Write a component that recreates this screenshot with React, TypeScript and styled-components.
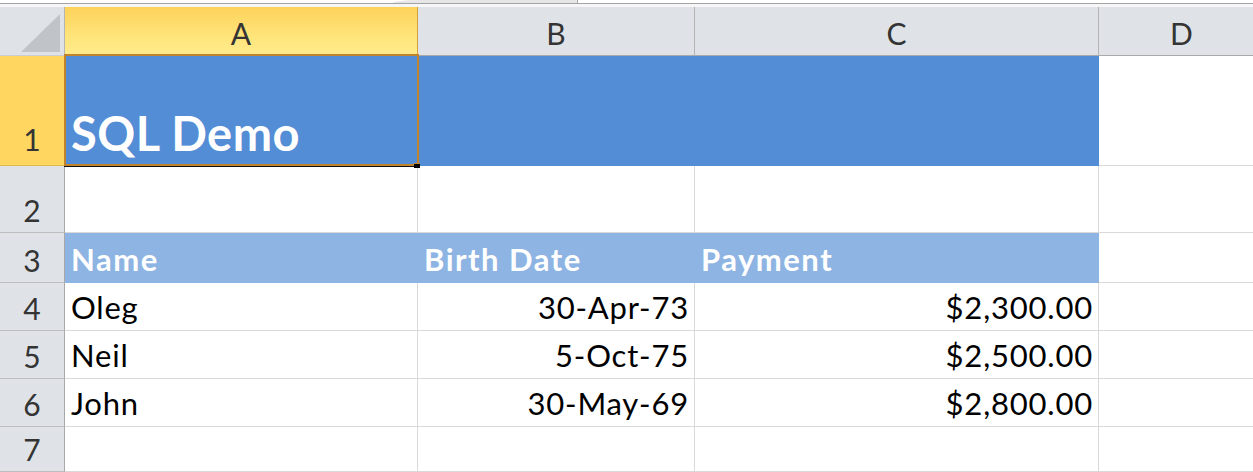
import React from "react";
import styled, { createGlobalStyle, css } from "styled-components";

const GlobalStyle = createGlobalStyle`
  html, body {
    margin: 0;
    padding: 0;
    background: #ffffff;
    overflow: hidden;
  }
  body {
    font-family: "Lato", "Open Sans", sans-serif;
  }
`;

const gridLine = "#d9d9d9";
const headerLine = "#b4b4b4";
const selectOrange = "#c1842c";

type Align = "left" | "right";
type Fill = "dark" | "light" | undefined;

const fills = {
  dark: "#538dd5",
  light: "#8db4e2",
};

const Page = styled.div`
  display: flex;
  flex-direction: column;
  width: 100vw;
  height: 100vh;
  overflow: hidden;
`;

const TopBar = styled.div`
  display: flex;
  flex-direction: column;
  height: 7px;
  flex-shrink: 0;
`;

const TabRow = styled.div`
  display: flex;
  height: 3px;
  padding-left: 393px;
`;

const Tab = styled.div`
  width: 184px;
  height: 3px;
  background: #e6e6e6;
  border-right: 1px solid #a8a8a8;
  border-top-left-radius: 28px 3px;
`;

const Rule = styled.div`
  height: 1px;
  background: #a3a3a3;
`;

const Gap = styled.div`
  height: 3px;
  background: #f6f6f6;
`;

const Sheet = styled.div`
  position: relative;
  flex: 1;
  display: grid;
  grid-template-columns: 65px 353px 277px 404px 166px;
  grid-template-rows: 49px 110px 67px 50px 48px 48px 48px 1fr;
  font-family: "Lato", "Open Sans", sans-serif;
`;

const Corner = styled.div`
  position: relative;
  box-sizing: border-box;
  background: #dfe3e8;
  border-right: 1px solid ${headerLine};
  border-bottom: 1px solid #c9ced4;
`;

const CornerTriangle = styled.svg`
  position: absolute;
  left: 21px;
  top: 6px;
`;

const ColumnHeader = styled.div<{ $selected?: boolean }>`
  box-sizing: border-box;
  display: flex;
  align-items: center;
  justify-content: center;
  padding-top: 4px;
  font-size: 30px;
  color: #343434;
  background: #dfe3e8;
  border-right: 1px solid ${headerLine};
  border-bottom: 1px solid #a9a9a9;
  ${({ $selected }) =>
    $selected &&
    css`
      background: linear-gradient(#fdd25a, #ffe47a 60%, #ffeb8c);
      border-right-color: #d3a13c;
    `}
`;

const RowHeader = styled.div<{ $selected?: boolean }>`
  box-sizing: border-box;
  display: flex;
  align-items: flex-end;
  justify-content: center;
  padding-bottom: ${({ $selected }) => ($selected ? "11px" : "7px")};
  font-size: 30px;
  line-height: 1;
  color: #343434;
  background: ${({ $selected }) => ($selected ? "#ffd65f" : "#dfe3e8")};
  border-right: 1px solid #a8a8a8;
  border-bottom: 1px solid ${({ $selected }) => ($selected ? "#e0b850" : "#bdbdbd")};
`;

const Cell = styled.div<{ $fill?: Fill; $align?: Align; $bold?: boolean; $title?: boolean }>`
  box-sizing: border-box;
  display: flex;
  align-items: flex-end;
  justify-content: ${({ $align }) => ($align === "right" ? "flex-end" : "flex-start")};
  padding: 0 5px 7px 6px;
  font-size: 31px;
  line-height: 1;
  letter-spacing: ${({ $bold }) => ($bold ? "1.5px" : "0.8px")};
  white-space: nowrap;
  color: ${({ $fill }) => ($fill ? "#ffffff" : "#000000")};
  font-weight: ${({ $bold }) => ($bold ? 700 : 400)};
  background: ${({ $fill }) => ($fill ? fills[$fill] : "#ffffff")};
  border-right: 1px solid ${({ $fill }) => ($fill ? fills[$fill] : gridLine)};
  border-bottom: 1px solid ${({ $fill }) => ($fill ? fills[$fill] : gridLine)};
  ${({ $title }) =>
    $title &&
    css`
      font-size: 47px;
      letter-spacing: 0.5px;
      padding-bottom: 8px;
    `}
`;

const Selection = styled.div`
  position: absolute;
  left: 64px;
  top: 47px;
  width: 355px;
  height: 112px;
  box-sizing: border-box;
  border: 2px solid ${selectOrange};
  box-shadow: 0 1px 0 #111111;
  pointer-events: none;
`;

const FillHandle = styled.div`
  position: absolute;
  left: 348px;
  top: 107px;
  width: 6px;
  height: 5px;
  background: #000000;
  border-top: 1px solid ${selectOrange};
  box-sizing: border-box;
`;

const columns = ["A", "B", "C", "D"];

interface RowData {
  name: string;
  birth: string;
  payment: string;
}

const people: RowData[] = [
  { name: "Oleg", birth: "30-Apr-73", payment: "$2,300.00" },
  { name: "Neil", birth: "5-Oct-75", payment: "$2,500.00" },
  { name: "John", birth: "30-May-69", payment: "$2,800.00" },
];

const App: React.FC = () => {
  return (
    <>
      <GlobalStyle />
      <Page>
        <TopBar>
          <TabRow>
            <Tab />
          </TabRow>
          <Rule />
          <Gap />
        </TopBar>
        <Sheet>
          <Corner>
            <CornerTriangle width="40" height="40" viewBox="0 0 40 40">
              <polygon points="39,1 39,39 0,39" fill="#c0c4c8" />
            </CornerTriangle>
          </Corner>
          {columns.map((c) => (
            <ColumnHeader key={c} $selected={c === "A"}>
              {c}
            </ColumnHeader>
          ))}

          <RowHeader $selected>1</RowHeader>
          <Cell $fill="dark" $bold $title>
            SQL Demo
          </Cell>
          <Cell $fill="dark" />
          <Cell $fill="dark" />
          <Cell />

          <RowHeader>2</RowHeader>
          <Cell />
          <Cell />
          <Cell />
          <Cell />

          <RowHeader>3</RowHeader>
          <Cell $fill="light" $bold>
            Name
          </Cell>
          <Cell $fill="light" $bold>
            Birth Date
          </Cell>
          <Cell $fill="light" $bold>
            Payment
          </Cell>
          <Cell />

          {people.map((p, i) => (
            <React.Fragment key={p.name}>
              <RowHeader>{i + 4}</RowHeader>
              <Cell>{p.name}</Cell>
              <Cell $align="right">{p.birth}</Cell>
              <Cell $align="right">{p.payment}</Cell>
              <Cell />
            </React.Fragment>
          ))}

          <RowHeader>7</RowHeader>
          <Cell />
          <Cell />
          <Cell />
          <Cell />

          <Selection>
            <FillHandle />
          </Selection>
        </Sheet>
      </Page>
    </>
  );
};

export default App;
